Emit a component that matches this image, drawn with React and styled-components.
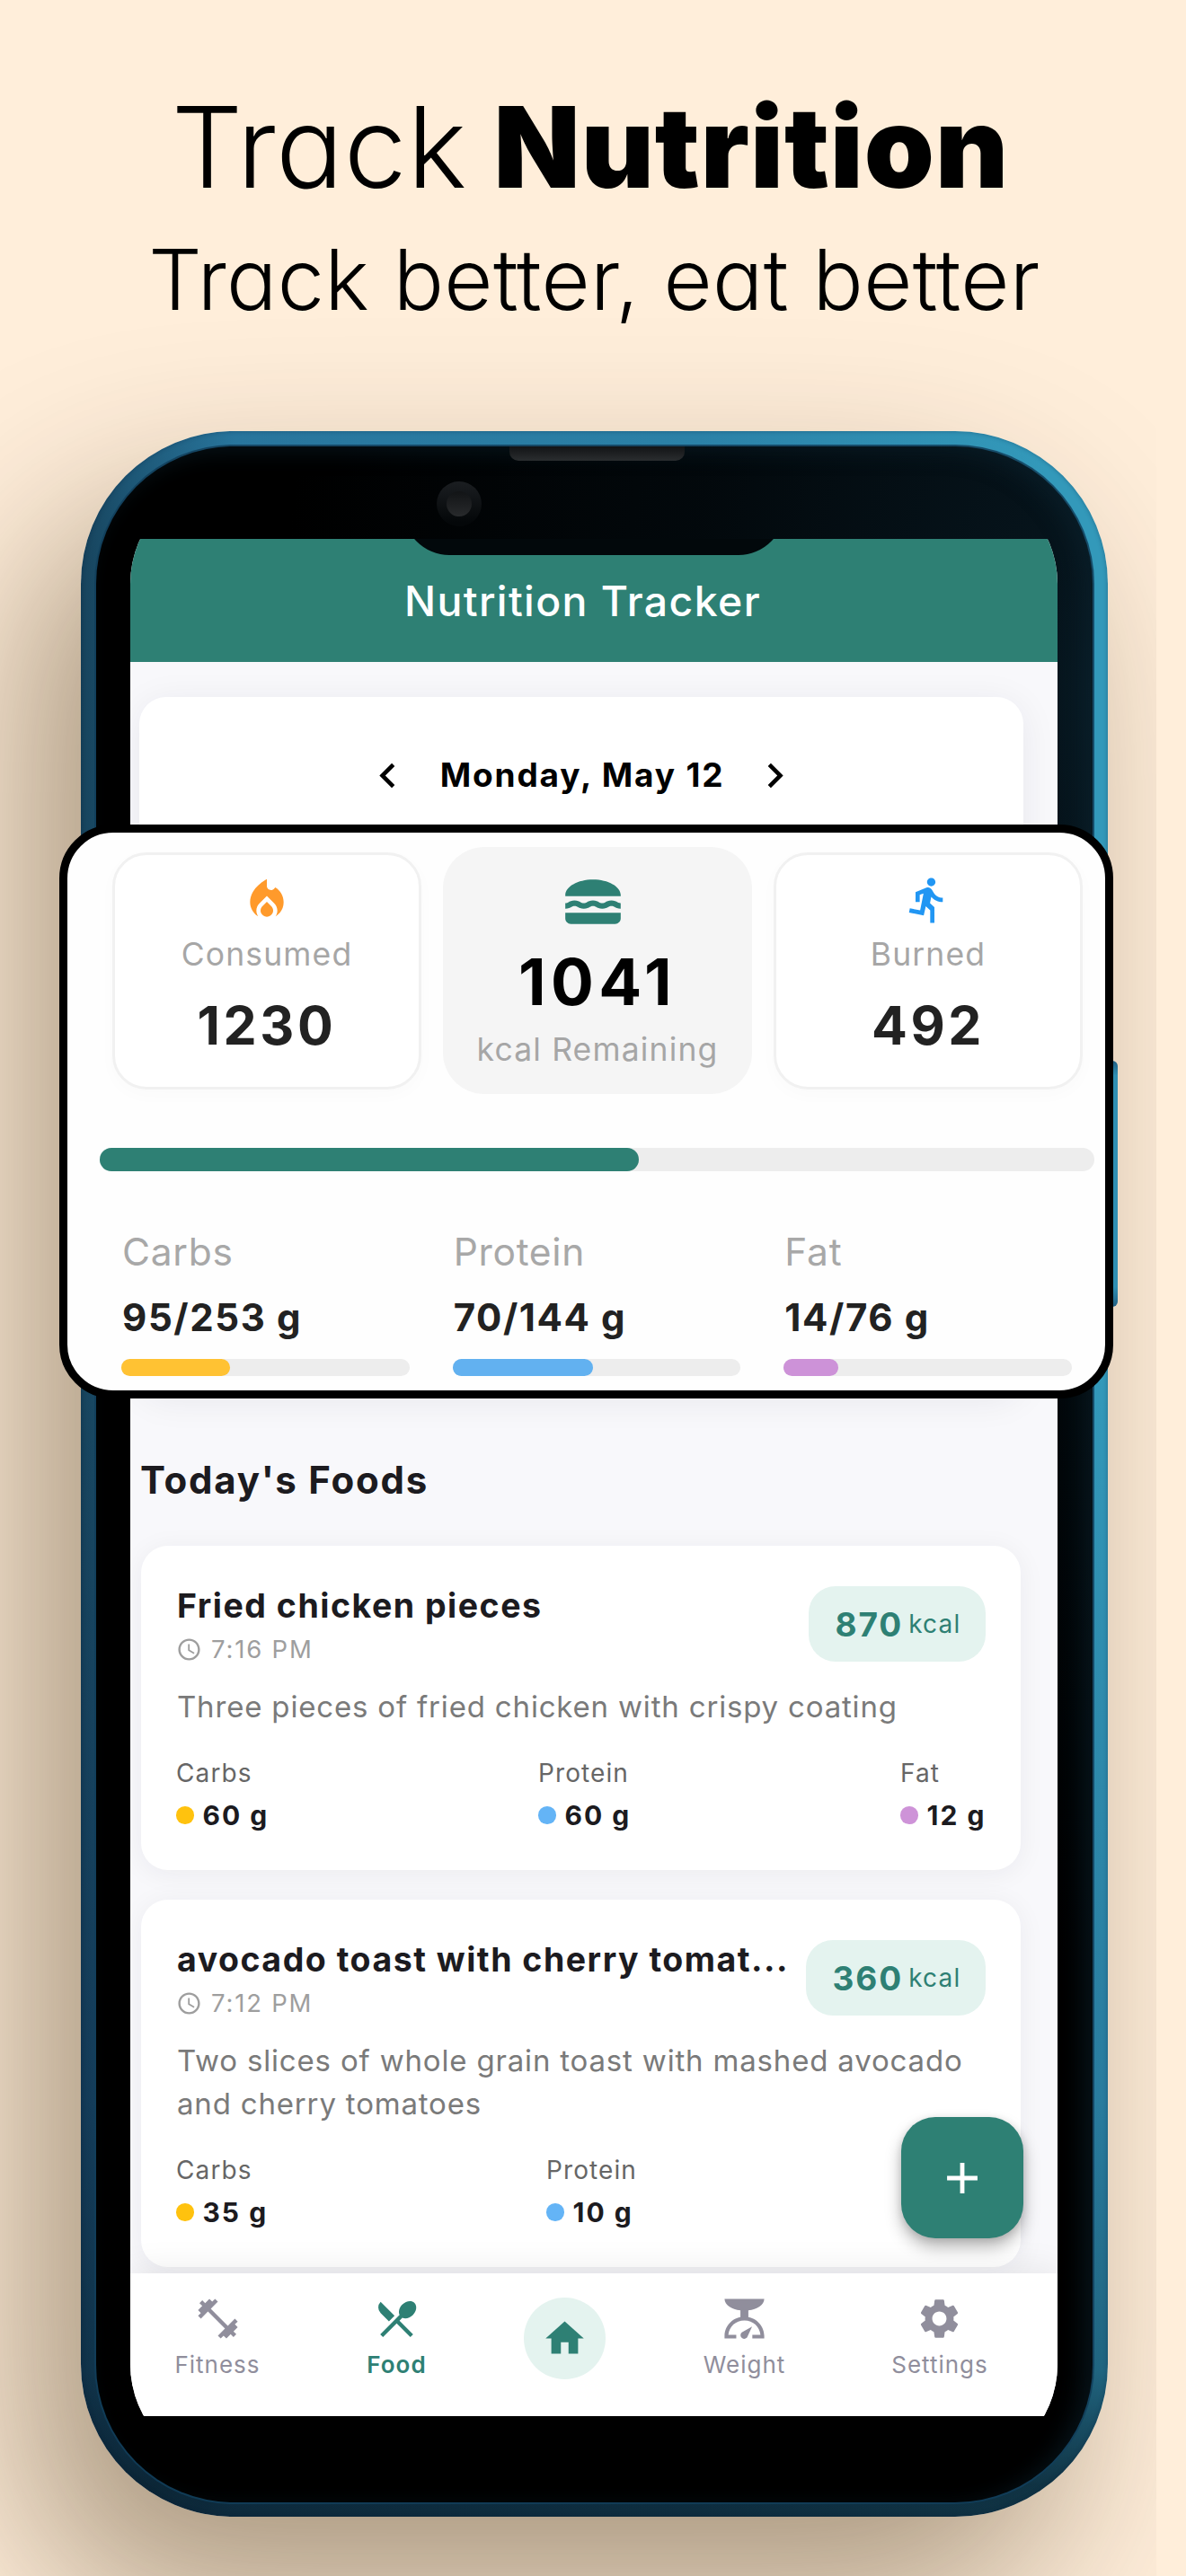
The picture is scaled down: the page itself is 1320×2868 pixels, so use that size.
import React from "react";
import styled, { createGlobalStyle } from "styled-components";
import {
  MdAccessTime,
  MdAdd,
  MdChevronLeft,
  MdChevronRight,
  MdDirectionsRun,
  MdFitnessCenter,
  MdHome,
  MdLocalFireDepartment,
  MdLunchDining,
  MdRestaurantMenu,
  MdSettings,
} from "react-icons/md";

const green = "#2e8074";
const mint = "#e4f3ef";
const ink = "#1c1b1f";
const amber = "#ffc20e";
const sky = "#64b4f6";
const orchid = "#ce93d8";

const GlobalStyle = createGlobalStyle`
  *, *::before, *::after { box-sizing: border-box; }
  body {
    margin: 0;
    background: #ffeeda;
    font-family: Inter, "Liberation Sans", sans-serif;
    color: ${ink};
  }
  h1, h2, h3, p { margin: 0; font-weight: inherit; }
  button { font: inherit; border: 0; padding: 0; background: none; color: inherit; }
  svg { display: block; flex: none; }
`;

const Page = styled.main`
  position: relative;
  width: 1320px;
  height: 2868px;
  padding-top: 104px;
  overflow: hidden;
  background: #ffeeda;
`;

/* ---------- headline ---------- */

const Headline = styled.header`
  position: relative;
  display: flex;
  flex-direction: column;
  align-items: center;
  gap: 37px;
  height: 257px;
  color: #000;
  white-space: nowrap;
  font-feature-settings: "cv11";
`;

const Title = styled.h1`
  padding-right: 6px;
  font-size: 125px;
  line-height: 120px;
  font-weight: 340;
  letter-spacing: 0.5px;
  word-spacing: -6px;
`;

const Strong = styled.strong`
  font-weight: 880;
  letter-spacing: 1px;
`;

const Tagline = styled.p`
  padding-left: 3px;
  font-size: 93.5px;
  line-height: 100px;
  font-weight: 300;
  letter-spacing: 0.35px;
`;

/* ---------- phone ---------- */

const ShadowStage = styled.div`
  position: absolute;
  inset: 0 33px 0 0;
  overflow: hidden;
`;

const PhoneShadow = styled.div`
  position: absolute;
  left: 90px;
  top: 480px;
  width: 1143px;
  height: 2322px;
  border-radius: 170px;
  box-shadow: -60px 95px 200px rgba(50, 32, 0, 0.42);
`;

const Phone = styled.section`
  position: relative;
  width: 1143px;
  height: 2322px;
  margin: 119px 0 0 90px;
  padding: 17px 17px 16px;
  border-radius: 170px;
  background:
    linear-gradient(180deg, rgba(5, 20, 32, 0) 45%, rgba(5, 20, 60, 0.22) 80%, rgba(4, 22, 40, 0.4) 93%, rgba(6, 22, 34, 0.78) 98.5%),
    linear-gradient(90deg, #17435c 0, #1d5776 5%, #28759c 15%, #2b81a7 60%, #3399ba 94%);
  box-shadow: inset 0 0 5px rgba(0, 30, 60, 0.35);
`;

const SideButton = styled.div`
  position: absolute;
  left: 1133px;
  top: 701px;
  width: 21px;
  height: 274px;
  border-radius: 0 6px 6px 0;
  background: linear-gradient(180deg, #205f83, #2f8fb3 6%, #2f8fb3 92%, #205f83);
`;

const Bezel = styled.div`
  position: relative;
  height: 100%;
  padding: 103px 39px 96px 38px;
  border-radius: 153px;
  background:
    radial-gradient(ellipse 900px 1500px at 100% 12%, rgba(8, 26, 36, 0.9), rgba(4, 14, 20, 0.6) 50%, transparent 100%),
    #000;
  box-shadow:
    0 0 0 2px rgba(18, 62, 90, 0.85),
    inset -12px 6px 24px rgba(14, 40, 54, 0.45);
`;

const Speaker = styled.div`
  position: absolute;
  left: 460px;
  top: 0;
  width: 195px;
  height: 16px;
  border-radius: 0 0 10px 10px;
  background: linear-gradient(180deg, #121416, #2a2d2f);
`;

const Camera = styled.div`
  position: absolute;
  left: 379px;
  top: 39px;
  display: grid;
  place-items: center;
  width: 50px;
  height: 50px;
  border-radius: 50%;
  background: linear-gradient(180deg, #1b1e21, #040709 90%);
`;

const Lens = styled.div`
  width: 28px;
  height: 28px;
  border-radius: 50%;
  background: linear-gradient(180deg, #121416, #282a2c);
`;

const Notch = styled.div`
  position: absolute;
  left: 304px;
  top: -84px;
  width: 424px;
  height: 102px;
  border-radius: 51px;
  background: #02080b;
  z-index: 2;
`;

const Screen = styled.div`
  position: relative;
  display: flex;
  flex-direction: column;
  height: 100%;
  overflow: hidden;
  background: #f8f8fb;
  clip-path: inset(-69px 0 -61px 0 round 119px);
`;

const AppBar = styled.div`
  flex: none;
  display: flex;
  align-items: center;
  justify-content: center;
  height: 137px;
  padding: 1px 25px 0 0;
  background: ${green};
  color: #fff;
  font-size: 46.4px;
  line-height: 60px;
  font-weight: 550;
  letter-spacing: 1.4px;
`;

const Feed = styled.div`
  flex: 1;
  min-height: 0;
  overflow: hidden;
  padding: 39px 41px 0 12px;
`;

const DayCard = styled.section`
  height: 777px;
  margin: 0 -3px 0 -2px;
  padding-top: 63px;
  border-radius: 30px;
  background: #fff;
  box-shadow: 0 6px 40px rgba(30, 30, 50, 0.07);
`;

const DateRow = styled.div`
  display: flex;
  align-items: center;
  justify-content: center;
  gap: 31px;
  height: 48px;
  color: #000;
`;

const DateText = styled.h2`
  margin-right: -2px;
  font-size: 37px;
  line-height: 46px;
  font-weight: 660;
  letter-spacing: 1.85px;
`;

const SectionTitle = styled.h2`
  margin: 67px 0 45px -1px;
  font-size: 42px;
  line-height: 56px;
  font-weight: 650;
  letter-spacing: 1.75px;
`;

const FoodList = styled.div`
  display: flex;
  flex-direction: column;
  gap: 33px;
`;

const FoodCard = styled.article`
  padding: 44px 39px 42px;
  border-radius: 30px;
  background: #fff;
  box-shadow: 0 4px 30px rgba(30, 30, 50, 0.06);
`;

const FoodHead = styled.div`
  display: flex;
  justify-content: space-between;
  align-items: flex-start;
  height: 89px;
  margin-bottom: 22px;
`;

const FoodTitle = styled.h3`
  padding-left: 1px;
  font-size: 37.5px;
  line-height: 46px;
  font-weight: 650;
  letter-spacing: 1.5px;
  white-space: nowrap;
`;

const FoodTime = styled.div`
  display: flex;
  align-items: center;
  gap: 10px;
  margin-top: 8px;
  font-size: 27.5px;
  line-height: 35px;
  letter-spacing: 1.8px;
  color: #9e9e9e;
`;

const EnergyPill = styled.div`
  display: flex;
  align-items: center;
  justify-content: center;
  flex: none;
  gap: 6px;
  width: ${(p) => p.$width}px;
  height: 84px;
  margin-top: 1px;
  padding-left: 2px;
  border-radius: 30px;
  background: ${mint};
  color: ${green};
  font-size: 28px;
  letter-spacing: 1.2px;
`;

const EnergyValue = styled.span`
  font-size: 37px;
  font-weight: 700;
  letter-spacing: 1.9px;
`;

const FoodText = styled.p`
  padding-left: 1px;
  font-size: 33px;
  line-height: 48px;
  letter-spacing: 0.82px;
  color: #7a7a7a;
`;

const FoodMacros = styled.div`
  display: grid;
  grid-template-columns: ${(p) => p.$pitch}px ${(p) => p.$pitch}px auto;
  margin-top: 33px;
`;

const MacroName = styled.div`
  font-size: 28px;
  line-height: 34px;
  letter-spacing: 1.1px;
  color: #666;
`;

const MacroAmount = styled.div`
  display: flex;
  align-items: center;
  gap: 10px;
  margin-top: 11px;
  font-size: 30px;
  line-height: 38px;
  font-weight: 700;
  letter-spacing: 2px;
  white-space: nowrap;
`;

const Dot = styled.span`
  width: 19.5px;
  height: 19.5px;
  border-radius: 50%;
  background: ${(p) => p.$color};
`;

const AddButton = styled.button`
  position: absolute;
  right: 38px;
  bottom: 198px;
  display: grid;
  place-items: center;
  width: 136px;
  height: 135px;
  border-radius: 38px;
  background: ${green};
  color: #fff;
  font-size: 58px;
  box-shadow: 0 10px 18px rgba(0, 0, 0, 0.28), 0 2px 8px rgba(0, 0, 0, 0.12);
`;

const TabBar = styled.nav`
  flex: none;
  position: relative;
  display: grid;
  grid-template-columns: 192px 207px 167px 233px 202px;
  justify-items: center;
  align-items: start;
  height: 159px;
  padding: 24px 0 0 1px;
  background: #fff;
  box-shadow: 0 -4px 36px rgba(0, 0, 0, 0.08);
`;

const Tab = styled.div`
  display: flex;
  flex-direction: column;
  align-items: center;
  gap: 8px;
  font-size: 26px;
  line-height: 34px;
  letter-spacing: 1px;
  font-weight: ${(p) => (p.$active ? 600 : 400)};
  color: ${(p) => (p.$active ? green : "#908e9c")};

  svg {
    width: 53px;
    height: 53px;
  }
`;

const HomeTab = styled.div`
  display: grid;
  place-items: center;
  width: 91px;
  height: 91px;
  margin-top: 3px;
  border-radius: 50%;
  background: ${mint};
  color: ${green};
  font-size: 51px;
`;

/* ---------- magnified summary ---------- */

const Summary = styled.section`
  position: absolute;
  left: 66px;
  top: 918px;
  width: 1173px;
  height: 639px;
  padding-top: 16px;
  border: 9px solid #000;
  border-radius: 60px;
  background: #fefefe;
`;

const TileRow = styled.div`
  display: grid;
  grid-template-columns: repeat(3, 1fr);
  align-items: center;
  column-gap: 24px;
  height: 275px;
  margin: 0 25px 60px 50px;
`;

const Tile = styled.div`
  display: flex;
  flex-direction: column;
  align-items: center;
  height: 264px;
  padding-top: 22px;
  border: 3px solid #f1f1f1;
  border-radius: 38px;
  background: #fff;
  box-shadow: 0 6px 20px rgba(0, 0, 0, 0.02);
`;

const FocusTile = styled(Tile)`
  height: 275px;
  padding-top: 24px;
  border: 0;
  border-radius: 46px;
  background: #f5f5f5;
  box-shadow: none;
`;

const TileIcon = styled.div`
  height: ${(p) => p.$size}px;
  margin-right: ${(p) => p.$shift || 0}px;
  color: ${(p) => p.$color};
  font-size: ${(p) => p.$size}px;
`;

const TileLabel = styled.div`
  margin-top: ${(p) => p.$gap}px;
  font-size: 35.5px;
  line-height: 44px;
  letter-spacing: 1.15px;
  color: #a6a6a6;
  white-space: nowrap;
`;

const TileValue = styled.div`
  margin-top: 22px;
  font-size: 59px;
  line-height: 70px;
  font-weight: 700;
  letter-spacing: 3.6px;
  color: #222;
`;

const FocusValue = styled(TileValue)`
  margin-top: 10px;
  font-size: 71px;
  line-height: 84px;
  letter-spacing: 5.4px;
  color: #000;
`;

const Track = styled.div`
  height: ${(p) => p.$height}px;
  border-radius: 13px;
  background: #ededed;
`;

const Fill = styled.div`
  height: 100%;
  width: ${(p) => p.$percent}%;
  border-radius: inherit;
  background: ${(p) => p.$color};
`;

const DayProgress = styled.div`
  margin: 0 12px 65px 36px;
`;

const GoalRow = styled.div`
  display: grid;
  grid-template-columns: repeat(3, 1fr);
  column-gap: 48px;
  margin: 0 37px 0 60px;
`;

const GoalName = styled.div`
  padding-left: 1px;
  font-size: 42.5px;
  line-height: 50px;
  letter-spacing: 0.7px;
  color: #a8a8a8;
`;

const GoalValue = styled.div`
  margin: 23px 0 21px;
  padding-left: 1px;
  font-size: 42px;
  line-height: 50px;
  font-weight: 660;
  letter-spacing: 1.6px;
  color: #222;
`;

function KitchenScaleIcon() {
  return (
    <svg viewBox="0 0 24 24" fill="currentColor">
      <path d="M2 2H22C21.9 5 18.5 7.3 14 7.8V11.4H10V7.8C5.5 7.3 2.1 5 2 2Z" />
      <path d="M2 22V20.6C2.2 15.2 6.5 11 12 11S21.8 15.2 22 20.6V22H16V20.1H20.1C19.7 16 16.4 12.85 12 12.85S4.3 16 3.9 20.1H7.9V22Z" />
      <path d="M15.9 16L13.7 20.7A1.85 1.85 0 1 1 10.7 18.9Z" />
    </svg>
  );
}

const foods = [
  {
    title: "Fried chicken pieces",
    time: "7:16 PM",
    kcal: 870,
    pill: 197,
    text: ["Three pieces of fried chicken with crispy coating"],
    pitch: 403,
    macros: [
      ["Carbs", "60 g", amber],
      ["Protein", "60 g", sky],
      ["Fat", "12 g", orchid],
    ],
  },
  {
    title: "avocado toast with cherry tomat...",
    time: "7:12 PM",
    kcal: 360,
    pill: 200,
    text: ["Two slices of whole grain toast with mashed avocado", "and cherry tomatoes"],
    pitch: 412,
    macros: [
      ["Carbs", "35 g", amber],
      ["Protein", "10 g", sky],
    ],
  },
];

const goals = [
  ["Carbs", "95/253 g", 37.8, "#ffc233"],
  ["Protein", "70/144 g", 48.8, "#62b1f0"],
  ["Fat", "14/76 g", 18.8, "#cd92d8"],
];

export default function App() {
  return (
    <Page>
      <GlobalStyle />
      <ShadowStage>
        <PhoneShadow />
      </ShadowStage>

      <Headline>
        <Title>
          Track <Strong>Nutrition</Strong>
        </Title>
        <Tagline>Track better, eat better</Tagline>
      </Headline>

      <Phone>
        <SideButton />
        <Bezel>
          <Speaker />
          <Camera>
            <Lens />
          </Camera>
          <Screen>
            <Notch />
            <AppBar>Nutrition Tracker</AppBar>
            <Feed>
              <DayCard>
                <DateRow>
                  <MdChevronLeft size={55} />
                  <DateText>Monday, May 12</DateText>
                  <MdChevronRight size={55} />
                </DateRow>
              </DayCard>
              <SectionTitle>Today's Foods</SectionTitle>
              <FoodList>
                {foods.map((food) => (
                  <FoodCard key={food.title}>
                    <FoodHead>
                      <div>
                        <FoodTitle>{food.title}</FoodTitle>
                        <FoodTime>
                          <MdAccessTime size={29} />
                          {food.time}
                        </FoodTime>
                      </div>
                      <EnergyPill $width={food.pill}>
                        <EnergyValue>{food.kcal}</EnergyValue>
                        kcal
                      </EnergyPill>
                    </FoodHead>
                    {food.text.map((line) => (
                      <FoodText key={line}>{line}</FoodText>
                    ))}
                    <FoodMacros $pitch={food.pitch}>
                      {food.macros.map(([name, amount, color]) => (
                        <div key={name}>
                          <MacroName>{name}</MacroName>
                          <MacroAmount>
                            <Dot $color={color} />
                            {amount}
                          </MacroAmount>
                        </div>
                      ))}
                    </FoodMacros>
                  </FoodCard>
                ))}
              </FoodList>
            </Feed>
            <TabBar>
              <Tab>
                <MdFitnessCenter />
                Fitness
              </Tab>
              <Tab $active>
                <MdRestaurantMenu />
                Food
              </Tab>
              <HomeTab>
                <MdHome />
              </HomeTab>
              <Tab>
                <KitchenScaleIcon />
                Weight
              </Tab>
              <Tab>
                <MdSettings />
                Settings
              </Tab>
            </TabBar>
            <AddButton>
              <MdAdd />
            </AddButton>
          </Screen>
        </Bezel>
      </Phone>

      <Summary>
        <TileRow>
          <Tile>
            <TileIcon $color="#ff9a2b" $size={56}>
              <MdLocalFireDepartment />
            </TileIcon>
            <TileLabel $gap={11}>Consumed</TileLabel>
            <TileValue>1230</TileValue>
          </Tile>
          <FocusTile>
            <TileIcon $color={green} $size={74} $shift={11}>
              <MdLunchDining />
            </TileIcon>
            <FocusValue>1041</FocusValue>
            <TileLabel $gap={12}>kcal Remaining</TileLabel>
          </FocusTile>
          <Tile>
            <TileIcon $color="#2196f3" $size={56}>
              <MdDirectionsRun />
            </TileIcon>
            <TileLabel $gap={11}>Burned</TileLabel>
            <TileValue>492</TileValue>
          </Tile>
        </TileRow>
        <DayProgress>
          <Track $height={26}>
            <Fill $percent={54.2} $color={green} />
          </Track>
        </DayProgress>
        <GoalRow>
          {goals.map(([name, value, percent, color]) => (
            <div key={name}>
              <GoalName>{name}</GoalName>
              <GoalValue>{value}</GoalValue>
              <Track $height={19}>
                <Fill $percent={percent} $color={color} />
              </Track>
            </div>
          ))}
        </GoalRow>
      </Summary>
    </Page>
  );
}
